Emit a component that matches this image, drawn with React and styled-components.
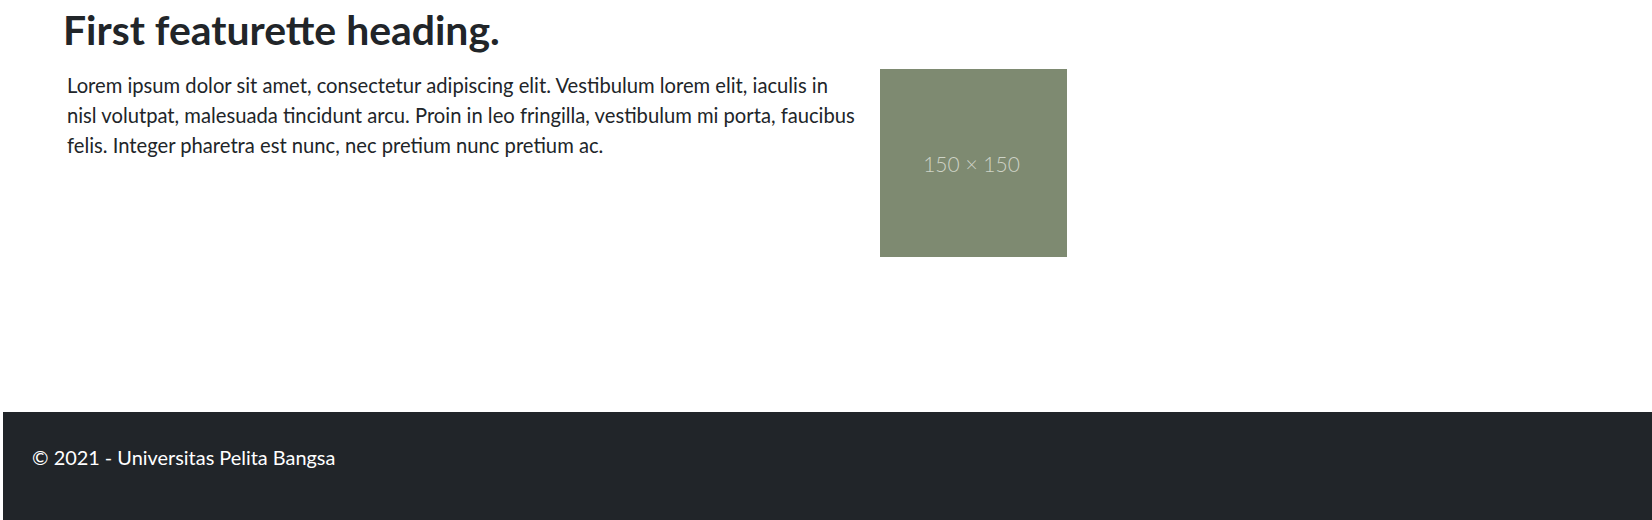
import React from 'react'
import styled, { createGlobalStyle } from 'styled-components'

const GlobalStyle = createGlobalStyle`
  body {
    margin: 0;
    font-family: Lato, "Liberation Sans", sans-serif;
    color: #212529;
    background: #fff;
  }
`

const Page = styled.div`
  display: flex;
  flex-direction: column;
  min-height: 100vh;
`

const Main = styled.main`
  flex: 1;
  padding: 6px 0 0 63px;
`

const Heading = styled.h1`
  margin: 0 0 16px;
  font-size: 40.9px;
  font-weight: 700;
  line-height: 48px;
`

const Featurette = styled.section`
  display: flex;
  align-items: flex-start;
  gap: 19px;
  padding-left: 4px;
`

const Lead = styled.p`
  width: 794px;
  margin: 0;
  font-size: 20.2px;
  line-height: 30px;
`

const Placeholder = styled.div`
  flex: none;
  width: 187px;
  height: 188px;
  margin-top: -1px;
  padding-right: 4px;
  box-sizing: border-box;
  display: flex;
  align-items: center;
  justify-content: center;
  background: #7e8a71;
  color: #ced3c7;
  font-size: 21px;
  font-weight: 300;
`

const Footer = styled.footer`
  margin-left: 3px;
  padding: 33px 29px 51px;
  background: #212529;
  color: #fff;
  font-size: 19.9px;
  line-height: 24px;
`

export default function App() {
  return (
    <Page>
      <GlobalStyle />
      <Main>
        <Heading>First featurette heading.</Heading>
        <Featurette>
          <Lead>
            Lorem ipsum dolor sit amet, consectetur adipiscing elit. Vestibulum lorem elit, iaculis in
            nisl volutpat, malesuada tincidunt arcu. Proin in leo fringilla, vestibulum mi porta, faucibus
            felis. Integer pharetra est nunc, nec pretium nunc pretium ac.
          </Lead>
          <Placeholder>150 × 150</Placeholder>
        </Featurette>
      </Main>
      <Footer>© 2021 - Universitas Pelita Bangsa</Footer>
    </Page>
  )
}
